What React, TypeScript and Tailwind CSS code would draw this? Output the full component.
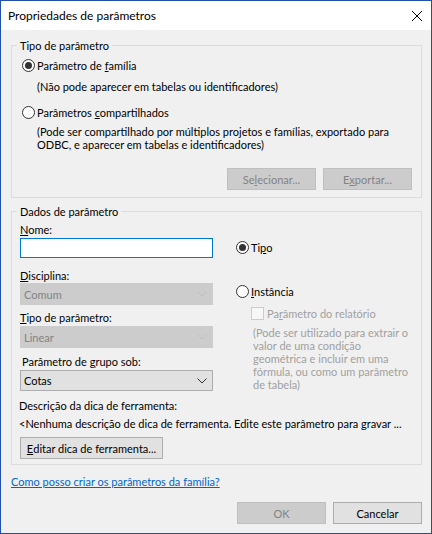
import React from "react";

function Radio({ checked }: { checked?: boolean }) {
  return (
    <span className="w-[13px] h-[13px] rounded-full border border-[#333333] bg-white flex items-center justify-center shrink-0">
      {checked && <span className="w-[7px] h-[7px] rounded-full bg-[#333333]" />}
    </span>
  );
}

function Chevron({ color }: { color: string }) {
  return (
    <svg width="10" height="6" viewBox="0 0 10 6" className="shrink-0">
      <polyline points="0.5,0.5 5,5 9.5,0.5" fill="none" stroke={color} strokeWidth="1" />
    </svg>
  );
}

function Combo({ value, disabled, h }: { value: string; disabled?: boolean; h: string }) {
  return (
    <div
      className={`${h} w-[193px] border flex items-center justify-between pl-[3px] pr-[5px] ${
        disabled ? "bg-[#cccccc] border-[#cccccc] text-[#838383]" : "bg-[#e1e1e1] border-[#adadad] text-black"
      }`}
    >
      <span>{value}</span>
      <Chevron color={disabled ? "#bfbfbf" : "#333333"} />
    </div>
  );
}

function Btn({ children, disabled, w }: { children: React.ReactNode; disabled?: boolean; w: string }) {
  return (
    <div
      className={`${w} h-[22px] border flex items-center justify-center ${
        disabled ? "bg-[#cccccc] border-[#bfbfbf] text-[#838383]" : "bg-[#e1e1e1] border-[#adadad] text-black"
      }`}
    >
      {children}
    </div>
  );
}

export default function App() {
  return (
    <div className="w-[432px] h-[534px] border border-[#2150a8] bg-[#f0f0f0] flex flex-col font-[Lato,sans-serif] text-[11px] leading-[15px] text-black whitespace-nowrap">
      {/* Title bar */}
      <div className="h-[29px] bg-white flex items-center justify-between pl-[7px] pr-[9px] shrink-0">
        <span className="text-[12px]">Propriedades de parâmetros</span>
        <svg width="10" height="10" viewBox="0 0 10 10">
          <path d="M0 0L10 10M10 0L0 10" stroke="#000" strokeWidth="1" />
        </svg>
      </div>

      <div className="pl-[10px] flex flex-col">
        {/* Tipo de parâmetro */}
        <fieldset className="mt-[8px] w-[411px] border border-[#dcdcdc] pb-[7px]">
          <legend className="ml-[5px] px-[3px]">Tipo de parâmetro</legend>
          <div className="mt-[5px] ml-[10px] flex items-center gap-[2px]">
            <Radio checked />
            <span>
              Parâmetro de <u>f</u>amília
            </span>
          </div>
          <div className="mt-[6px] pl-[25px]">(Não pode aparecer em tabelas ou identificadores)</div>
          <div className="mt-[11px] ml-[10px] flex items-center gap-[2px]">
            <Radio />
            <span>
              Parâmetros <u>c</u>ompartilhados
            </span>
          </div>
          <div className="mt-[5px] pl-[25px] leading-[13px]">
            (Pode ser compartilhado por múltiplos projetos e famílias, exportado para
            <br />
            ODBC, e aparecer em tabelas e identificadores)
          </div>
          <div className="mt-[17px] pr-[9px] flex justify-end gap-[7px]">
            <Btn w="w-[89px]" disabled>
              Se<u>l</u>ecionar...
            </Btn>
            <Btn w="w-[89px]" disabled>
              E<u>x</u>portar...
            </Btn>
          </div>
        </fieldset>

        {/* Dados de parâmetro */}
        <fieldset className="mt-[6px] w-[411px] border border-[#dcdcdc] pb-[5px] pl-[8px]">
          <legend className="ml-[-3px] px-[3px]">Dados de parâmetro</legend>
          <div className="flex">
            <div className="w-[193px] flex flex-col">
              <div className="mt-[3px]">
                <u>N</u>ome:
              </div>
              <div className="mt-[1px] h-[20px] w-[193px] border border-[#0078d7] bg-white" />
              <div className="mt-[10px]">
                <u>D</u>isciplina:
              </div>
              <Combo value="Comum" disabled h="h-[22px]" />
              <div className="mt-[5px]">
                <u>T</u>ipo de parâmetro:
              </div>
              <div className="mt-[1px]">
                <Combo value="Linear" disabled h="h-[22px]" />
              </div>
              <div className="mt-[6px] ml-[2px]">
                Parâmetro de <u>g</u>rupo sob:
              </div>
              <div className="mt-[1px]">
                <Combo value="Cotas" h="h-[21px]" />
              </div>
            </div>

            <div className="ml-[23px] flex flex-col">
              <div className="mt-[21px] flex items-center gap-[2px]">
                <Radio checked />
                <span>
                  Ti<u>p</u>o
                </span>
              </div>
              <div className="mt-[29px] flex items-center gap-[2px]">
                <Radio />
                <span>
                  <u>I</u>nstância
                </span>
              </div>
              <div className="mt-[7px] ml-[15px] flex items-center gap-[3px] text-[#a0a0a0]">
                <span className="w-[13px] h-[13px] border border-[#cccccc] bg-[#f7f7f7] shrink-0" />
                <span>
                  Pa<u>r</u>âmetro do relatório
                </span>
              </div>
              <div className="mt-[5px] ml-[17px] leading-[13px] text-[#a0a0a0]">
                (Pode ser utilizado para extrair o
                <br />
                valor de uma condição
                <br />
                geométrica e incluir em uma
                <br />
                fórmula, ou como um parâmetro
                <br />
                de tabela)
              </div>
            </div>
          </div>

          <div className="mt-[7px] ml-[-1px]">Descrição da dica de ferramenta:</div>
          <div className="mt-[3px] ml-[-1px]">
            &lt;Nenhuma descrição de dica de ferramenta. Edite este parâmetro para gravar ...
          </div>
          <div className="mt-[6px]">
            <Btn w="w-[143px]">
              <u>E</u>ditar dica de ferramenta...
            </Btn>
          </div>
        </fieldset>

        <a className="mt-[9px] text-[#0066cc] underline w-fit" href="#">
          Como posso criar os parâmetros da família?
        </a>

        <div className="mt-[13px] w-[411px] flex justify-end gap-[7px]">
          <Btn w="w-[89px]" disabled>
            OK
          </Btn>
          <Btn w="w-[89px]">Cancelar</Btn>
        </div>
      </div>
    </div>
  );
}
